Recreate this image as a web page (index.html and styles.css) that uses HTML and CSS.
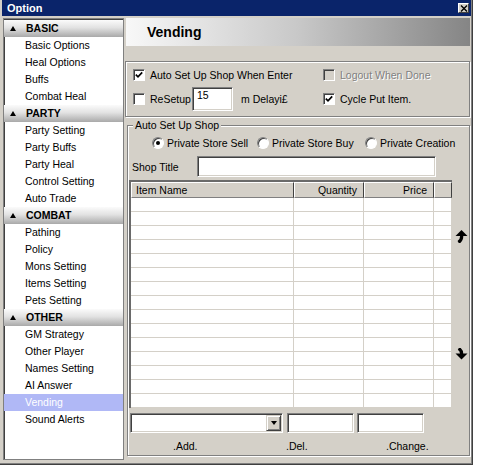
FILE: index.html
```html
<!DOCTYPE html>
<html lang="en">
<head>
  <meta charset="UTF-8">
  <title>Option</title>
  <link rel="stylesheet" href="styles.css">
</head>
<body>
  <div class="window">
    <div class="titlebar">
      <span class="title">Option</span>
      <span class="close-btn">
        <svg width="8" height="7" viewBox="0 0 8 7"><path d="M1 0.5 L7 6.5 M7 0.5 L1 6.5" stroke="#000" stroke-width="1.4"/></svg>
      </span>
    </div>

    <div class="content">
      <div class="sidebar">
        <div class="group-head"><span class="tri"></span>BASIC</div>
        <div class="item">Basic Options</div>
        <div class="item">Heal Options</div>
        <div class="item">Buffs</div>
        <div class="item">Combat Heal</div>
        <div class="group-head"><span class="tri"></span>PARTY</div>
        <div class="item">Party Setting</div>
        <div class="item">Party Buffs</div>
        <div class="item">Party Heal</div>
        <div class="item">Control Setting</div>
        <div class="item">Auto Trade</div>
        <div class="group-head"><span class="tri"></span>COMBAT</div>
        <div class="item">Pathing</div>
        <div class="item">Policy</div>
        <div class="item">Mons Setting</div>
        <div class="item">Items Setting</div>
        <div class="item">Pets Setting</div>
        <div class="group-head"><span class="tri"></span>OTHER</div>
        <div class="item">GM Strategy</div>
        <div class="item">Other Player</div>
        <div class="item">Names Setting</div>
        <div class="item">AI Answer</div>
        <div class="item selected">Vending</div>
        <div class="item">Sound Alerts</div>
      </div>

      <div class="main">
        <div class="page-head">Vending</div>

        <div class="options">
          <label class="opt">
            <span class="checkbox checked"><svg width="8" height="8" viewBox="0 0 8 8"><path d="M0.8 3.6 L3 5.8 L7.2 1.4" fill="none" stroke="#000" stroke-width="1.7"/></svg></span>
            Auto Set Up Shop When Enter
          </label>
          <label class="opt disabled">
            <span class="checkbox"></span>
            Logout When Done
          </label>
          <div class="opt">
            <span class="checkbox white"></span>
            <span class="resetup">ReSetup</span>
            <span class="edit delay">15</span>
            <span class="delay-unit">m Delayi£</span>
          </div>
          <label class="opt">
            <span class="checkbox checked"><svg width="8" height="8" viewBox="0 0 8 8"><path d="M0.8 3.6 L3 5.8 L7.2 1.4" fill="none" stroke="#000" stroke-width="1.7"/></svg></span>
            Cycle Put Item.
          </label>
        </div>

        <fieldset class="shop">
          <legend>Auto Set Up Shop</legend>

          <div class="radios">
            <label class="radio-opt sell"><span class="radio on"></span>Private Store Sell</label>
            <label class="radio-opt buy"><span class="radio"></span>Private Store Buy</label>
            <label class="radio-opt"><span class="radio"></span>Private Creation</label>
          </div>

          <div class="title-row">
            <span class="title-label">Shop Title</span>
            <span class="edit shop-title"></span>
          </div>

          <div class="list-row">
            <div class="list">
              <div class="list-head">
                <div class="hcell">Item Name</div>
                <div class="hcell right">Quantity</div>
                <div class="hcell right">Price</div>
                <div class="hcell"></div>
              </div>
              <div class="row"><div></div><div></div><div></div><div></div></div>
              <div class="row"><div></div><div></div><div></div><div></div></div>
              <div class="row"><div></div><div></div><div></div><div></div></div>
              <div class="row"><div></div><div></div><div></div><div></div></div>
              <div class="row"><div></div><div></div><div></div><div></div></div>
              <div class="row"><div></div><div></div><div></div><div></div></div>
              <div class="row"><div></div><div></div><div></div><div></div></div>
              <div class="row"><div></div><div></div><div></div><div></div></div>
              <div class="row"><div></div><div></div><div></div><div></div></div>
              <div class="row"><div></div><div></div><div></div><div></div></div>
              <div class="row"><div></div><div></div><div></div><div></div></div>
              <div class="row"><div></div><div></div><div></div><div></div></div>
              <div class="row"><div></div><div></div><div></div><div></div></div>
              <div class="row"><div></div><div></div><div></div><div></div></div>
              <div class="row"><div></div><div></div><div></div><div></div></div>
            </div>
            <div class="arrows">
              <svg class="arrow-up" width="13" height="13" viewBox="0 0 13 13">
                <path d="M0.5 6 L6.5 0 L12.5 6 Z" fill="#000"/>
                <path d="M6.6 5 C7 8.5 6 10.8 3.4 12.4" fill="none" stroke="#000" stroke-width="3.2"/>
              </svg>
              <svg class="arrow-down" width="13" height="12" viewBox="0 0 13 12">
                <path d="M0.5 5.5 L6.5 11.5 L12.5 5.5 Z" fill="#000"/>
                <path d="M6.6 7 C6.9 4 6 1.8 3.6 0.4" fill="none" stroke="#000" stroke-width="3.2"/>
              </svg>
            </div>
          </div>

          <div class="edit-row">
            <div class="combo">
              <span class="drop-btn"><span class="drop-tri"></span></span>
            </div>
            <span class="edit small"></span>
            <span class="edit small last"></span>
          </div>

          <div class="actions">
            <span class="act add">.Add.</span>
            <span class="act del">.Del.</span>
            <span class="act">.Change.</span>
          </div>
        </fieldset>
      </div>
    </div>
  </div>
</body>
</html>
```

FILE: styles.css
```css
* {
  box-sizing: border-box;
}
body {
  margin: 0;
  background: #fff;
  font-family: "Liberation Sans", Arial, sans-serif;
  font-size: 10.5px;
  color: #000;
}
.window {
  width: 473px;
  height: 465px;
  background: #d4d0c8;
  border-right: 1px solid #404040;
  border-bottom: 1px solid #404040;
  box-shadow: inset -1px -1px #808080;
  display: flex;
  flex-direction: column;
}
.titlebar {
  height: 16px;
  margin: 0 1px 0 2px;
  background: #0a246a;
  display: flex;
  align-items: center;
  justify-content: space-between;
  padding: 0 2px 0 5px;
}
.title {
  color: #fff;
  font-weight: bold;
  font-size: 11px;
}
.close-btn {
  width: 11px;
  height: 10px;
  background: #d4d0c8;
  border: 1px solid;
  border-color: #fff #404040 #404040 #fff;
  display: flex;
  align-items: center;
  justify-content: center;
}
.content {
  flex: 1;
  display: flex;
  padding-top: 2px;
  min-height: 0;
}

/* left tree */
.sidebar {
  width: 121px;
  margin: 0 0 4px 3px;
  background: #fff;
  border: 1px solid #808080;
  box-shadow: inset 1px 1px #404040;
  padding: 1px 0 0 0;
}
.group-head {
  height: 17px;
  line-height: 17px;
  font-weight: bold;
  padding-left: 22px;
  background: linear-gradient(#fbfbfb, #e2e2e2 45%, #a9a9a9);
  position: relative;
}
.tri {
  position: absolute;
  left: 6px;
  top: 6px;
  border-left: 3.5px solid transparent;
  border-right: 3.5px solid transparent;
  border-bottom: 5px solid #000;
}
.item {
  height: 17px;
  line-height: 17px;
  padding-left: 21px;
}
.item.selected {
  background: #b0b8f6;
  color: #fff;
}

/* right side */
.main {
  flex: 1;
  margin: 0 2px 0 1px;
  display: flex;
  flex-direction: column;
}
.page-head {
  height: 28px;
  line-height: 28px;
  margin-left: 1px;
  padding-left: 21px;
  font-size: 14px;
  font-weight: bold;
  background: linear-gradient(to right, #f8f8f8, #c8c8c8 50%, #858585);
}
.options {
  margin-top: 15px;
  border: 1px solid #808080;
  box-shadow: inset 1px 1px #fff, 1px 1px #fff;
  display: grid;
  grid-template-columns: 190px 1fr;
  grid-template-rows: 13px 24px;
  row-gap: 6px;
  padding: 6px 0 5px 7px;
}
.opt {
  display: flex;
  align-items: center;
  gap: 5px;
}
.checkbox {
  width: 12px;
  height: 12px;
  flex: none;
  background: #d4d0c8;
  border: 1px solid;
  border-color: #808080 #fff #fff #808080;
  box-shadow: inset 1px 1px #404040;
  display: flex;
  align-items: center;
  justify-content: center;
}
.checkbox.checked, .checkbox.white {
  background: #fff;
}
.disabled {
  color: #808080;
  text-shadow: 1px 1px #fff;
}
.resetup {
  width: 42px;
}
.edit {
  background: #fff;
  border: 1px solid;
  border-color: #808080 #fff #fff #808080;
  box-shadow: inset 1px 1px #404040, inset -1px -1px #d4d0c8;
}
.delay {
  width: 41px;
  height: 24px;
  padding: 1px 4px;
  margin-left: -5px;
  align-self: stretch;
}
.delay-unit {
  margin-left: 3px;
}

.shop {
  margin: 2px 0 0 2px;
  padding: 0 0 2px 0;
  border: 1px solid #808080;
  box-shadow: inset 1px 1px #fff, 1px 1px #fff;
}
.shop legend {
  margin-left: 5px;
  padding: 0 2px;
  line-height: 13px;
  background: #d4d0c8;
}
.radios {
  display: flex;
  height: 14px;
  margin-top: 4px;
  padding-left: 24px;
}
.radio-opt {
  display: flex;
  align-items: center;
  gap: 3px;
}
.radio-opt.sell {
  width: 105px;
}
.radio-opt.buy {
  width: 108px;
}
.radio {
  width: 12px;
  height: 12px;
  border-radius: 50%;
  background: #fff;
  border: 1px solid;
  border-color: #808080 #fff #fff #808080;
  box-shadow: inset 1px 1px #404040;
  display: flex;
  align-items: center;
  justify-content: center;
}
.radio.on::after {
  content: "";
  width: 4px;
  height: 4px;
  border-radius: 50%;
  background: #000;
}
.title-row {
  display: flex;
  align-items: center;
  height: 21px;
  margin-top: 6px;
  padding-left: 4px;
}
.title-label {
  width: 65px;
}
.shop-title {
  width: 239px;
  height: 21px;
}
.list-row {
  display: flex;
  margin-top: 3px;
  padding-left: 1px;
}
.list {
  width: 323px;
  background: #fff;
  border-style: solid;
  border-width: 2px 0 0 2px;
  border-color: #6a6a6a;
}
.list-head, .row {
  display: grid;
  grid-template-columns: 163px 70px 70px 18px;
}
.hcell {
  height: 16px;
  line-height: 14px;
  padding: 0 6px 0 4px;
  background: #d4d0c8;
  border: 1px solid;
  border-color: #fff #404040 #808080 #fff;
}
.hcell.right {
  text-align: right;
}
.row {
  height: 14px;
  border-bottom: 1px solid #d4d0c8;
}
.row div {
  border-right: 1px solid #d4d0c8;
}
.arrows {
  width: 17px;
  padding-left: 3px;
  display: flex;
  flex-direction: column;
}
.arrow-up {
  margin-top: 50px;
}
.arrow-down {
  margin-top: 105px;
}
.edit-row {
  display: flex;
  height: 20px;
  margin-top: 5px;
  padding-left: 2px;
}
.combo {
  width: 153px;
  height: 20px;
  background: #fff;
  border: 1px solid;
  border-color: #808080 #fff #fff #808080;
  box-shadow: inset 1px 1px #404040, inset -1px -1px #d4d0c8;
  display: flex;
  justify-content: flex-end;
  padding: 1px;
}
.drop-btn {
  width: 15px;
  height: 16px;
  background: #d4d0c8;
  border: 1px solid;
  border-color: #d4d0c8 #404040 #404040 #d4d0c8;
  box-shadow: inset 1px 1px #fff, inset -1px -1px #808080;
  display: flex;
  align-items: center;
  justify-content: center;
}
.drop-tri {
  border-left: 3.5px solid transparent;
  border-right: 3.5px solid transparent;
  border-top: 4px solid #000;
}
.edit.small {
  width: 67px;
  height: 20px;
  margin-left: 4px;
}
.edit.small.last {
  margin-left: 3px;
}
.actions {
  display: flex;
  height: 13px;
  line-height: 13px;
  margin-top: 7px;
  padding-left: 45px;
}
.act.add {
  width: 113px;
}
.act.del {
  width: 100px;
}
```
